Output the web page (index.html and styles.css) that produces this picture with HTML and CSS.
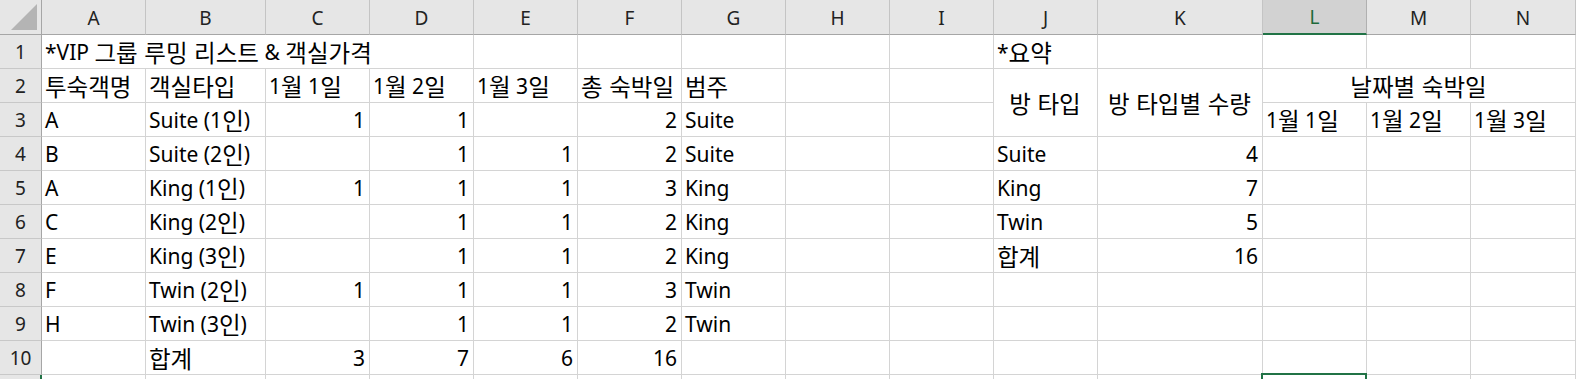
FILE: index.html
```html
<!DOCTYPE html>
<html lang="ko">
<head>
<meta charset="utf-8">
<title>VIP 그룹 루밍 리스트</title>
<link rel="stylesheet" href="styles.css">
</head>
<body>
<div class="sheet">
  <!-- column header row -->
  <div class="corner"><span class="tri"></span></div>
  <div class="ch">A</div><div class="ch">B</div><div class="ch">C</div><div class="ch">D</div>
  <div class="ch">E</div><div class="ch">F</div><div class="ch">G</div><div class="ch">H</div>
  <div class="ch">I</div><div class="ch">J</div><div class="ch">K</div><div class="ch sel">L</div>
  <div class="ch">M</div><div class="ch">N</div>

  <!-- row 1 -->
  <div class="rh">1</div>
  <div class="c span4">*VIP <span class="k">그룹 루밍 리스트</span> &amp; <span class="k">객실가격</span></div>
  <div class="c"></div><div class="c"></div><div class="c"></div><div class="c"></div><div class="c"></div>
  <div class="c">*<span class="k">요약</span></div><div class="c"></div><div class="c"></div><div class="c"></div><div class="c"></div>

  <!-- row 2 -->
  <div class="rh">2</div>
  <div class="c"><span class="k">투숙객명</span></div><div class="c"><span class="k">객실타입</span></div>
  <div class="c">1<span class="k">월</span> 1<span class="k">일</span></div>
  <div class="c">1<span class="k">월</span> 2<span class="k">일</span></div>
  <div class="c">1<span class="k">월</span> 3<span class="k">일</span></div>
  <div class="c"><span class="k">총 숙박일</span></div><div class="c"><span class="k">범주</span></div>
  <div class="c"></div><div class="c"></div>
  <div class="c ctr tall"><span class="k">방 타입</span></div>
  <div class="c ctr tall"><span class="k">방 타입별 수량</span></div>
  <div class="c ctr span3"><span class="k">날짜별 숙박일</span></div>

  <!-- row 3 -->
  <div class="rh">3</div>
  <div class="c">A</div><div class="c">Suite (1<span class="k">인</span>)</div><div class="c n">1</div><div class="c n">1</div>
  <div class="c"></div><div class="c n">2</div><div class="c">Suite</div><div class="c"></div><div class="c"></div>
  <div class="c">1<span class="k">월</span> 1<span class="k">일</span></div>
  <div class="c">1<span class="k">월</span> 2<span class="k">일</span></div>
  <div class="c">1<span class="k">월</span> 3<span class="k">일</span></div>

  <!-- row 4 -->
  <div class="rh">4</div>
  <div class="c">B</div><div class="c">Suite (2<span class="k">인</span>)</div><div class="c"></div><div class="c n">1</div>
  <div class="c n">1</div><div class="c n">2</div><div class="c">Suite</div><div class="c"></div><div class="c"></div>
  <div class="c">Suite</div><div class="c n">4</div><div class="c"></div><div class="c"></div><div class="c"></div>

  <!-- row 5 -->
  <div class="rh">5</div>
  <div class="c">A</div><div class="c">King (1<span class="k">인</span>)</div><div class="c n">1</div><div class="c n">1</div>
  <div class="c n">1</div><div class="c n">3</div><div class="c">King</div><div class="c"></div><div class="c"></div>
  <div class="c">King</div><div class="c n">7</div><div class="c"></div><div class="c"></div><div class="c"></div>

  <!-- row 6 -->
  <div class="rh">6</div>
  <div class="c">C</div><div class="c">King (2<span class="k">인</span>)</div><div class="c"></div><div class="c n">1</div>
  <div class="c n">1</div><div class="c n">2</div><div class="c">King</div><div class="c"></div><div class="c"></div>
  <div class="c">Twin</div><div class="c n">5</div><div class="c"></div><div class="c"></div><div class="c"></div>

  <!-- row 7 -->
  <div class="rh">7</div>
  <div class="c">E</div><div class="c">King (3<span class="k">인</span>)</div><div class="c"></div><div class="c n">1</div>
  <div class="c n">1</div><div class="c n">2</div><div class="c">King</div><div class="c"></div><div class="c"></div>
  <div class="c"><span class="k">합계</span></div><div class="c n">16</div><div class="c"></div><div class="c"></div><div class="c"></div>

  <!-- row 8 -->
  <div class="rh">8</div>
  <div class="c">F</div><div class="c">Twin (2<span class="k">인</span>)</div><div class="c n">1</div><div class="c n">1</div>
  <div class="c n">1</div><div class="c n">3</div><div class="c">Twin</div><div class="c"></div><div class="c"></div>
  <div class="c"></div><div class="c"></div><div class="c"></div><div class="c"></div><div class="c"></div>

  <!-- row 9 -->
  <div class="rh">9</div>
  <div class="c">H</div><div class="c">Twin (3<span class="k">인</span>)</div><div class="c"></div><div class="c n">1</div>
  <div class="c n">1</div><div class="c n">2</div><div class="c">Twin</div><div class="c"></div><div class="c"></div>
  <div class="c"></div><div class="c"></div><div class="c"></div><div class="c"></div><div class="c"></div>

  <!-- row 10 -->
  <div class="rh">10</div>
  <div class="c"></div><div class="c"><span class="k">합계</span></div><div class="c n">3</div><div class="c n">7</div>
  <div class="c n">6</div><div class="c n">16</div><div class="c"></div><div class="c"></div><div class="c"></div>
  <div class="c"></div><div class="c"></div><div class="c"></div><div class="c"></div><div class="c"></div>

  <!-- row 11 (only its top edge is visible) -->
  <div class="rh selrow"></div>
  <div class="c"></div><div class="c"></div><div class="c"></div><div class="c"></div>
  <div class="c"></div><div class="c"></div><div class="c"></div><div class="c"></div><div class="c"></div>
  <div class="c"></div><div class="c"></div><div class="c active"></div><div class="c"></div><div class="c"></div>
</div>
</body>
</html>
```

FILE: styles.css
```css
html, body {
  margin: 0;
  padding: 0;
  background: #ffffff;
  overflow: hidden;
}

.sheet {
  display: grid;
  grid-template-columns: 42px 104px 120px repeat(8, 104px) 165px 104px 104px 105px;
  grid-template-rows: 35px repeat(11, 34px);
  width: 1576px;
  height: 379px;
  overflow: hidden;
  font-family: "Noto Sans", "Noto Sans CJK KR", sans-serif;
  color: #000;
}

.corner {
  position: relative;
  background: #e6e6e6;
  border-right: 1px solid #a6a6a6;
  border-bottom: 1px solid #a6a6a6;
  box-sizing: border-box;
}

.tri {
  position: absolute;
  right: 4px;
  bottom: 4px;
  width: 0;
  height: 0;
  border-style: solid;
  border-width: 0 0 26px 26px;
  border-color: transparent transparent #b4b4b4 transparent;
}

.ch {
  box-sizing: border-box;
  background: #e6e6e6;
  border-right: 1px solid #c4c4c4;
  border-bottom: 1px solid #a6a6a6;
  display: flex;
  align-items: center;
  justify-content: center;
  font-size: 19px;
  color: #222;
  padding-top: 1px;
}

.ch.sel {
  background: #d2d2d2;
  color: #1d6a3a;
  border-bottom: 2px solid #217346;
  border-right-color: #b0b0b0;
}

.rh {
  box-sizing: border-box;
  background: #e6e6e6;
  border-right: 1px solid #a6a6a6;
  border-bottom: 1px solid #c8c8c8;
  display: flex;
  align-items: center;
  justify-content: center;
  font-size: 19px;
  color: #222;
  padding-top: 1px;
}

.rh.selrow {
  border-right: 2px solid #217346;
}

.c {
  position: relative;
  box-sizing: border-box;
  border-right: 1px solid #d4d4d4;
  border-bottom: 1px solid #d4d4d4;
  display: flex;
  align-items: center;
  padding: 2px 4px 0 3px;
  font-size: 21px;
  line-height: 1.2;
  white-space: pre;
  overflow: visible;
}

.k {
  font-family: "Noto Sans CJK KR", sans-serif;
  font-size: 23.5px;
  line-height: 1;
}

.c.n {
  justify-content: flex-end;
}

.c.ctr {
  justify-content: center;
}

.c.span4 {
  grid-column: span 4;
}

.c.span3 {
  grid-column: span 3;
}

.c.tall {
  grid-row: span 2;
}

.c.active::after {
  content: "";
  position: absolute;
  top: -2px;
  left: -2px;
  right: -1px;
  bottom: -1px;
  border: 2px solid #217346;
}
```
